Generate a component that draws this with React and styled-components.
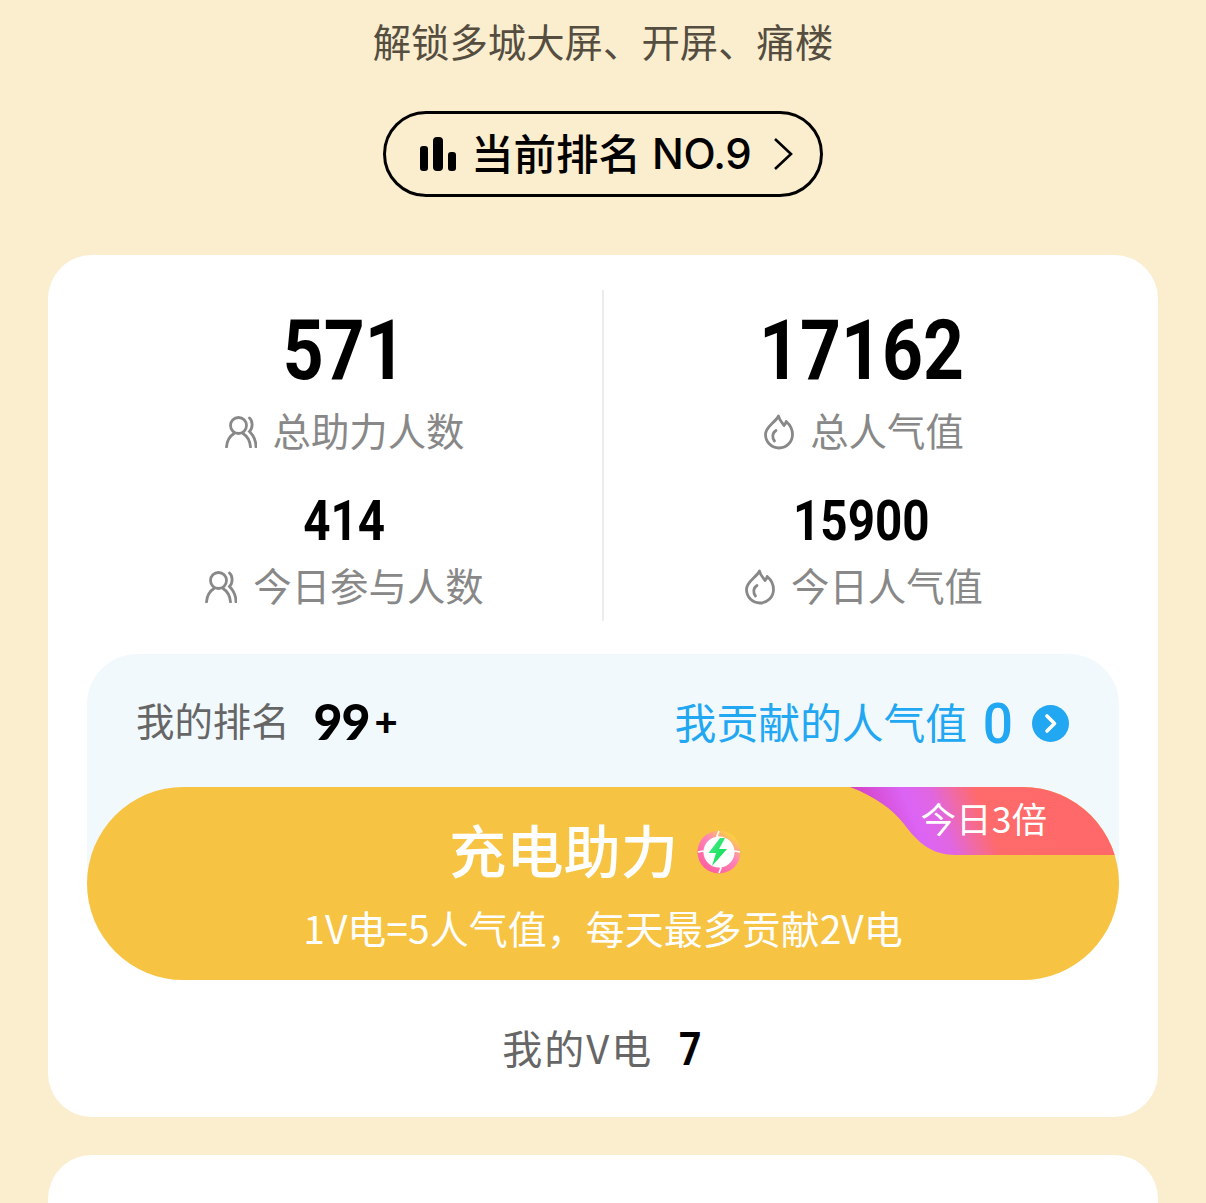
import React from 'react'
import styled, { createGlobalStyle } from 'styled-components'

const CJK = `"Noto Sans CJK SC", "Noto Sans", sans-serif`
const NUM = `Roboto, "Noto Sans", sans-serif`

const Global = createGlobalStyle`
  html, body { margin: 0; padding: 0; background: #fbeecf; }
  * { box-sizing: border-box; }
`

const Page = styled.div`
  width: 1206px;
  height: 1203px;
  overflow: hidden;
  display: flex;
  flex-direction: column;
  align-items: center;
  padding: 13px 48px 0;
  font-family: ${CJK};
  background: #fbeecf;
`

const Subtitle = styled.div`
  font-size: 38.4px;
  line-height: 54px;
  color: #544d40;
`

const RankButton = styled.div`
  margin-top: 44px;
  width: 440px;
  height: 86px;
  flex: none;
  border: 3px solid #000;
  border-radius: 43px;
  display: flex;
  align-items: center;
  padding-left: 34px;
  color: #000;
`

const RankText = styled.span`
  margin-left: 15px;
  padding-bottom: 3px;
  font-size: 42.5px;
  line-height: 1;
  font-weight: 500;
`

const RankNo = styled.span`
  margin-left: 11px;
  font-family: "Inter", ${NUM};
  font-size: 42px;
  font-weight: 500;
  letter-spacing: -0.4px;
  line-height: 1;
`

const Card = styled.div`
  width: 1110px;
  flex: none;
  background: #fff;
  border-radius: 44px;
  margin-top: ${p => p.$gap}px;
  padding: 35px 39px 0;
  height: ${p => p.$height}px;
`

const Stats = styled.div`
  display: grid;
  grid-template-columns: 1fr 2px 1fr;
  height: 331px;
`

const Divider = styled.div`
  background: #ececec;
`

const StatColumn = styled.div`
  display: flex;
  flex-direction: column;
  align-items: center;
`

const BigNumber = styled.div`
  height: 116px;
  font-family: ${NUM};
  font-weight: 700;
  font-size: 84px;
  line-height: 121px;
  color: #000;
  transform: scaleX(0.85);
`

const SmallNumber = styled.div`
  height: 72px;
  font-family: ${NUM};
  font-weight: 700;
  font-size: 56px;
  line-height: 74px;
  margin-top: 26px;
  color: #000;
  transform: scaleX(0.85);
`

const StatLabel = styled.div`
  display: flex;
  align-items: center;
  gap: 16px;
  height: 52px;
  font-size: 38.4px;
  color: #888;
  margin-top: ${p => p.$gap || 0}px;
  margin-left: ${p => p.$shift || 0}px;
`

const LabelText = styled.span`
  padding-bottom: 6px;
`

const Panel = styled.div`
  margin-top: 33px;
  border-radius: 50px 50px 0 0;
  background: linear-gradient(#f2f9fd 0, #f2f9fd 229px, #fff 229px);
`

const PanelTop = styled.div`
  height: 133px;
  display: flex;
  align-items: center;
  justify-content: space-between;
  padding: 0 50px 0 49px;
`

const RankSide = styled.div`
  display: flex;
  align-items: center;
  margin-top: ${p => p.$top || 0}px;
`

const Muted = styled.span`
  padding-bottom: 3px;
  font-size: ${p => p.$size || 38.4}px;
  letter-spacing: ${p => p.$track || 0}px;
  line-height: 1;
  color: #666;
`

const RankValue = styled.span`
  margin-left: 24px;
  font-family: "Lato", ${NUM};
  font-weight: 900;
  font-size: 50px;
  line-height: 1;
  letter-spacing: -1px;
  color: #000;
`

const RankPlus = styled.span`
  margin-left: 5px;
  font-family: "Lato", ${NUM};
  font-weight: 900;
  font-size: 40px;
  line-height: 1;
  color: #000;
`

const ContributeText = styled.span`
  padding-bottom: 4px;
  font-size: 41.8px;
  line-height: 1;
  color: #22a7f2;
`

const ContributeValue = styled.span`
  margin-left: 15px;
  font-family: ${NUM};
  font-weight: 500;
  font-size: 56px;
  line-height: 1;
  color: #22a7f2;
  transform: scaleX(0.95);
`

const ArrowDot = styled.svg`
  margin-left: 18px;
  width: 37px;
  height: 37px;
  display: block;
`

const ChargeButton = styled.div`
  position: relative;
  height: 193px;
  border-radius: 97px;
  overflow: hidden;
  background: #f7c342;
  color: #fff;
  display: flex;
  flex-direction: column;
  align-items: center;
`

const ChargeTitle = styled.div`
  margin-top: 29px;
  margin-right: 16px;
  display: flex;
  align-items: center;
  gap: 19px;
  height: 72px;
  font-size: 57.3px;
  font-weight: 500;
  line-height: 1;
`

const TitleText = styled.span`
  padding-bottom: 6px;
`

const ChargeNote = styled.div`
  margin-top: 12px;
  font-size: 39px;
  line-height: 54px;
  white-space: nowrap;
`

const Ribbon = styled.svg`
  position: absolute;
  top: 0;
  right: 0;
  width: 269px;
  height: 68px;
  display: block;
`

const RibbonText = styled.span`
  position: absolute;
  top: 8px;
  right: 72px;
  font-size: 35.6px;
  line-height: 46px;
  color: #fff;
`

const Wallet = styled.div`
  height: 137px;
  display: flex;
  align-items: center;
  justify-content: center;
`

const WalletValue = styled.span`
  margin-left: 24px;
  font-family: ${NUM};
  font-weight: 700;
  font-size: 46px;
  line-height: 1;
  color: #000;
  transform: scaleX(0.85);
`

const PeopleIcon = () => (
  <svg width="32" height="32" viewBox="0 0 32 32" fill="none" stroke="#888" strokeWidth="2.8" strokeLinecap="round">
    <circle cx="13.5" cy="9.5" r="8" />
    <path d="M1.500 31C2 24 5 20 9 17.500M18 17.500C22 20 25 24 25.500 31" />
    <path d="M24.500 2C28 5 28 12 24.500 15.500 28 19 31 24 31 31" />
  </svg>
)

const FlameIcon = () => (
  <svg width="30" height="36" viewBox="0 0 30 36" fill="none" stroke="#888" strokeWidth="2.8" strokeLinecap="round" strokeLinejoin="round">
    <path d="M14.500 2c1 4.500 3.500 6.500 5.500 9.500 1-1 2-2.500 2.200-4 3.500 3 6.300 7.500 6.300 13 0 7.500-6 13.500-13.500 13.500S1.500 28 1.500 20.500C1.500 12.500 11 9 14.500 2z" />
    <path d="M10.500 27c-2.500-3-2.500-8 1.500-10.500" />
  </svg>
)

const BarsIcon = () => (
  <svg width="36" height="34" viewBox="0 0 36 34" fill="#000">
    <rect x="0" y="9" width="8" height="25" rx="3" />
    <rect x="13" y="0" width="10" height="34" rx="4" />
    <rect x="28" y="15" width="8" height="19" rx="3" />
  </svg>
)

const ChevronIcon = () => (
  <svg width="20" height="34" viewBox="0 0 20 34" fill="none" stroke="#000" strokeWidth="2.6" style={{ marginLeft: 22 }}>
    <path d="M2 2l16 15L2 32" />
  </svg>
)

const CoinIcon = () => (
  <svg width="44" height="44" viewBox="0 0 44 44">
    <defs>
      <linearGradient id="coinRing" x1="0.2" y1="0.9" x2="0.8" y2="0.1">
        <stop offset="0" stopColor="#ff5fa0" />
        <stop offset="0.6" stopColor="#ff86b8" />
        <stop offset="1" stopColor="#fcd23f" />
      </linearGradient>
      <linearGradient id="coinBolt" x1="0" y1="0" x2="1" y2="1">
        <stop offset="0" stopColor="#4df08a" />
        <stop offset="1" stopColor="#00d84a" />
      </linearGradient>
    </defs>
    <circle cx="22" cy="22" r="21.500" fill="url(#coinRing)" />
    <circle cx="22" cy="22" r="15.500" fill="#fff" />
    <path d="M1 22l5-1 3 2M43 22l-5-1-3 2M22 1l-2 5 3 3M22 43l2-5-3-3" fill="none" stroke="#fff" strokeWidth="1.600" />
    <path d="M23 8L11.500 23h7.500l-4 13 15-17h-8l6-11z" fill="url(#coinBolt)" />
  </svg>
)

const Stat = ({ big, bigLabel, small, smallLabel, Icon, shift }) => (
  <StatColumn>
    <BigNumber>{big}</BigNumber>
    <StatLabel $shift={shift}><Icon /><LabelText>{bigLabel}</LabelText></StatLabel>
    <SmallNumber>{small}</SmallNumber>
    <StatLabel $gap={5} $shift={shift}><Icon /><LabelText>{smallLabel}</LabelText></StatLabel>
  </StatColumn>
)

export default function App() {
  return (
    <Page>
      <Global />
      <Subtitle>解锁多城大屏、开屏、痛楼</Subtitle>
      <RankButton>
        <BarsIcon />
        <RankText>当前排名</RankText>
        <RankNo>NO.9</RankNo>
        <ChevronIcon />
      </RankButton>

      <Card $gap={58} $height={862}>
        <Stats>
          <Stat big="571" bigLabel="总助力人数" small="414" smallLabel="今日参与人数" Icon={PeopleIcon} />
          <Divider />
          <Stat big="17162" bigLabel="总人气值" small="15900" smallLabel="今日人气值" Icon={FlameIcon} shift={5} />
        </Stats>

        <Panel>
          <PanelTop>
            <RankSide>
              <Muted>我的排名</Muted>
              <RankValue>99</RankValue>
              <RankPlus>+</RankPlus>
            </RankSide>
            <RankSide $top={6}>
              <ContributeText>我贡献的人气值</ContributeText>
              <ContributeValue>0</ContributeValue>
              <ArrowDot viewBox="0 0 37 37">
                <circle cx="18.500" cy="18.500" r="18.500" fill="#22a7f2" />
                <path d="M15 11l7.500 7.500L15 26" fill="none" stroke="#fff" strokeWidth="3.600" strokeLinecap="round" strokeLinejoin="round" />
              </ArrowDot>
            </RankSide>
          </PanelTop>

          <ChargeButton>
            <Ribbon viewBox="0 0 269 68">
              <defs>
                <linearGradient id="ribbonFill" x1="0" y1="0.1" x2="1" y2="0">
                  <stop offset="0" stopColor="#d23fc0" />
                  <stop offset="0.2" stopColor="#dc64f5" />
                  <stop offset="0.3" stopColor="#e066e0" />
                  <stop offset="0.38" stopColor="#f06aa5" />
                  <stop offset="0.47" stopColor="#ff6a6a" />
                  <stop offset="1" stopColor="#ff6868" />
                </linearGradient>
              </defs>
              <path d="M0 0C26 10 42 22 54 37 68 56 82 68 106 68H269V0z" fill="url(#ribbonFill)" />
            </Ribbon>
            <RibbonText>今日3倍</RibbonText>
            <ChargeTitle><TitleText>充电助力</TitleText><CoinIcon /></ChargeTitle>
            <ChargeNote>1V电=5人气值，每天最多贡献2V电</ChargeNote>
          </ChargeButton>
        </Panel>

        <Wallet>
          <Muted $size={40} $track={2}>我的V电</Muted>
          <WalletValue>7</WalletValue>
        </Wallet>
      </Card>

      <Card $gap={38} $height={200} />
    </Page>
  )
}
